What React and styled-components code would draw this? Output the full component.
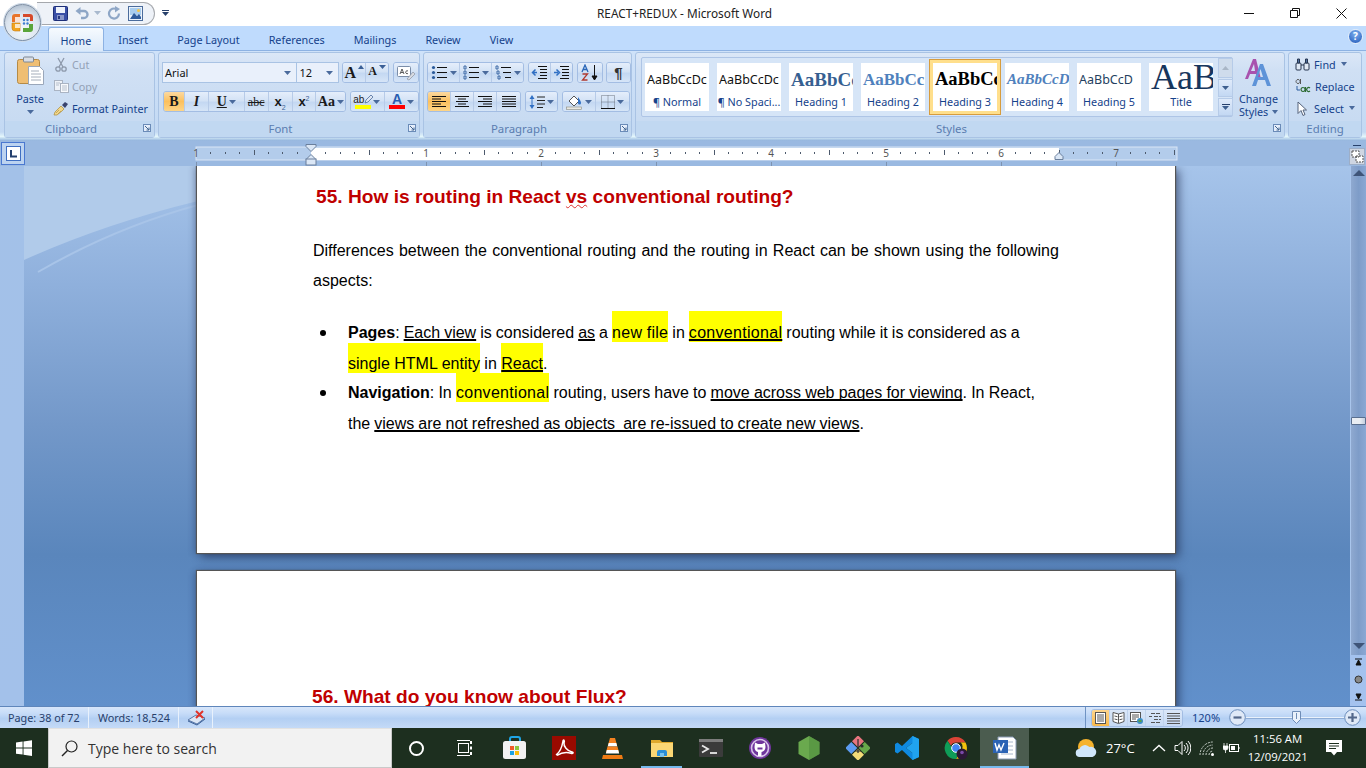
import React from "react";
import styled, { createGlobalStyle } from "styled-components";

const GlobalStyle = createGlobalStyle`
  html, body { margin: 0; padding: 0; height: 100%; overflow: hidden; }
  body { font-family: "Noto Sans", "Open Sans", sans-serif; font-size: 10.8px; color: #15428b; }
  * { box-sizing: border-box; }
`;

/* ---------- small drawings ---------- */

const Ico = ({ w = 16, h = 16, vb, children }) => (
  <svg width={w} height={h} viewBox={vb || `0 0 ${w} ${h}`} style={{ display: "block", flex: "none" }}>
    {children}
  </svg>
);

const Caret = ({ color = "#4a6a9c" }) => (
  <Ico w={7} h={4}><path d="M0 0h7L3.5 4z" fill={color} /></Ico>
);

const OfficeLogo = () => (
  <Ico w={28} h={28}>
    <path d="M3 8q0-3 3-3h5v8H3z" fill="#e8742a" />
    <path d="M3 14h8v8H6q-3 0-3-3z" fill="#f2a51f" stroke="#c77a12" strokeWidth=".6" />
    <path d="M14 5h7q3 0 3 3v4h-3V8h-7z" fill="#d64a2a" />
    <rect x="6" y="8" width="5" height="5" fill="#fff" opacity=".8" />
    <rect x="6" y="15" width="5" height="4" fill="#fff" opacity=".75" />
    <path d="M14 23h7q3 0 3-3v-5h-4v4h-6z" fill="#5aa53a" />
    <g fill="#3f7fd0">
      <circle cx="15" cy="11" r="1.2" /><circle cx="18.5" cy="11" r="1.2" /><circle cx="15" cy="14.5" r="1.2" /><circle cx="18.5" cy="14.5" r="1.2" />
    </g>
  </Ico>
);

const SaveIcon = () => (
  <Ico w={15} h={15}>
    <rect x=".5" y=".5" width="14" height="14" rx="1" fill="#3a4fa6" stroke="#1e2f78" />
    <rect x="3" y="1" width="9" height="6" fill="#eef2fb" />
    <rect x="4" y="9" width="7" height="5" fill="#8a97c9" />
    <rect x="5" y="10" width="2" height="3" fill="#29397f" />
  </Ico>
);

const UndoIcon = () => (
  <Ico w={14} h={14}>
    <path d="M4 5h5a3.5 3.5 0 0 1 0 7H6" fill="none" stroke="#8ea6c6" strokeWidth="2.4" />
    <path d="M5.5 1v8L.5 5z" fill="#8ea6c6" />
  </Ico>
);

const RedoIcon = () => (
  <Ico w={14} h={14}>
    <path d="M9.5 3.2A5 5 0 1 0 12 7.5" fill="none" stroke="#8ea6c6" strokeWidth="2.2" />
    <path d="M8 0v6.5L13 3z" fill="#8ea6c6" />
  </Ico>
);

const ImageIcon = () => (
  <Ico w={15} h={15}>
    <rect x=".5" y=".5" width="14" height="14" fill="#eaf2fb" stroke="#4b6c9c" />
    <rect x="2" y="2" width="11" height="7" fill="#a9cdee" />
    <path d="M2 13l4-6 3 3 2-2 2 3v2z" fill="#2f5c9c" />
    <circle cx="10.5" cy="4.5" r="1.5" fill="#f3c54a" />
  </Ico>
);

const PasteIcon = () => (
  <Ico w={29} h={30}>
    <rect x="1.5" y="3.5" width="22" height="24" rx="2" fill="#efbe73" stroke="#b58a45" />
    <rect x="7.5" y="1" width="10" height="5" rx="1" fill="#d9dde4" stroke="#7d8794" />
    <path d="M12.5 10.5h11l4 4v14h-15z" fill="#fff" stroke="#9aa7ba" />
    <path d="M15 15h8M15 18h10M15 21h10M15 24h10" stroke="#a4adba" />
  </Ico>
);

const CutIcon = () => (
  <Ico w={12} h={15}>
    <path d="M3 1l5 9M9 1L4 10" stroke="#8d99ab" strokeWidth="1.3" />
    <circle cx="3" cy="12" r="2.2" fill="none" stroke="#8d99ab" strokeWidth="1.3" />
    <circle cx="9" cy="12" r="2.2" fill="none" stroke="#8d99ab" strokeWidth="1.3" />
  </Ico>
);

const CopyIcon = () => (
  <Ico w={15} h={13}>
    <rect x=".5" y=".5" width="8" height="10" fill="#eef2f8" stroke="#aab4c3" />
    <rect x="6.5" y="3.5" width="8" height="9" fill="#f8fafd" stroke="#aab4c3" />
    <path d="M8 6h5M8 8h5M8 10h5M2 3h4M2 5h3" stroke="#b6bfcc" />
  </Ico>
);

const BrushIcon = () => (
  <Ico w={16} h={15}>
    <path d="M8 5l3 3-2 2-5 4H1l1-3 4-4z" fill="#f0d68a" stroke="#ab8b3b" strokeWidth=".7" />
    <path d="M9 4l3-3 3 2-3 4z" fill="#39436d" />
    <path d="M3 12l3-3M5 13l3-3" stroke="#b89443" strokeWidth=".7" />
  </Ico>
);

const ClearFmt = () => (
  <Ico w={20} h={16}>
    <rect x="1.5" y="1.5" width="13" height="10" rx="1" fill="#fff" stroke="#7b8ea9" />
    <path d="M4 9l2-5 2 5M5 7.5h2M12 6a1.5 1.5 0 1 0 0 2.5" fill="none" stroke="#333" strokeWidth=".8" />
    <path d="M11 14l6-7 2 2-6 6z" fill="#d8dbe2" stroke="#8d93a0" strokeWidth=".7" />
  </Ico>
);

const PenMark = () => (
  <Ico w={9} h={10}><path d="M1 9l1-3 5-5 2 2-5 5z" fill="#dfe6f2" stroke="#4b6c9c" strokeWidth=".8" /></Ico>
);

const Launcher = () => (
  <Ico w={8} h={8}>
    <rect x=".5" y=".5" width="7" height="7" fill="#e5eefb" stroke="#6a8bb8" />
    <path d="M2 2l4 4M6 3.5V6H3.5" stroke="#41648f" fill="none" />
  </Ico>
);

const ListIcon = ({ marks, indents = [0, 0, 0] }) => (
  <Ico w={17} h={15}>
    {indents.map((r, i) => (
      <React.Fragment key={i}>
        {marks ? (
          <path d={`M${1 + r / 2} ${1 + i * 5}h2v3h-2z`} fill="none" stroke="#2f5f9e" strokeWidth=".9" />
        ) : (
          <circle cx="2.5" cy={2.5 + i * 5} r="1.6" fill="#2a5a9a" />
        )}
        <path d={`M${6 + r} ${2.5 + i * 5}H16`} stroke="#111" />
      </React.Fragment>
    ))}
  </Ico>
);

const IndentIcon = ({ right }) => (
  <Ico w={17} h={13}>
    <path d="M7 .5h9M9 3.5h7M9 6.5h7M9 9.5h7M7 12.5h9" stroke="#111" />
    {right ? (
      <path d="M1 6.5h4M3.5 3.5l3 3-3 3" fill="none" stroke="#2f6fc4" strokeWidth="1.5" />
    ) : (
      <path d="M6 6.5H2M4.5 3.5l-3 3 3 3" fill="none" stroke="#2f6fc4" strokeWidth="1.5" />
    )}
  </Ico>
);

const SortIcon = () => (
  <Ico w={18} h={17}>
    <path d="M1 8l3-7 3 7M2.2 5.5h3.6" fill="none" stroke="#2a66b8" strokeWidth="1.3" />
    <path d="M1.5 10h5L1.5 16h5" fill="none" stroke="#b03a30" strokeWidth="1.3" />
    <path d="M13.5 1v14M11 12l2.5 4 2.5-4z" stroke="#111" fill="#111" />
  </Ico>
);

const AlignIcon = ({ mode }) => {
  const rows = [
    [14, 9, 14, 9, 14],
    [14, 8, 12, 8, 14],
    [14, 9, 14, 9, 14],
    [14, 14, 14, 14, 14],
  ][mode];
  return (
    <Ico w={14} h={11}>
      {rows.map((w, i) => {
        const x = mode === 0 || mode === 3 ? 0 : mode === 2 ? 14 - w : (14 - w) / 2;
        return <rect key={i} x={x} y={i * 2.5} width={w} height="1" fill="#111" />;
      })}
    </Ico>
  );
};

const SpacingIcon = () => (
  <Ico w={16} h={16}>
    <path d="M3 1L.5 5h5zM3 15L.5 11h5z" fill="#2f6fc4" />
    <path d="M3 5v6" stroke="#2f6fc4" />
    <path d="M8 3h8M8 6.5h8M8 10h8M8 13.5h6" stroke="#222" />
  </Ico>
);

const FillIcon = () => (
  <Ico w={17} h={16}>
    <path d="M3 7l5-5 5 5-5 5z" fill="#fff" stroke="#555" />
    <path d="M12 3q3 4 3 6a1.5 1.5 0 0 1-3 0z" fill="#2f6fc4" />
    <rect x="0.5" y="13" width="15" height="2.5" fill="#e8e8e2" stroke="#8b8b83" strokeWidth=".6" />
  </Ico>
);

const BorderIcon = () => (
  <Ico w={14} h={14}>
    <path d="M.5.5h13v13H.5zM7 .5v13M.5 7h13" fill="none" stroke="#6d7480" strokeDasharray="1 1" />
    <path d="M0 13.5h14" stroke="#111" />
  </Ico>
);

const ChangeStyles = () => (
  <Ico w={30} h={29}>
    <path d="M1 21L9 1h3l5 20h-4l-1-5H6l-2 5zM7 13h4l-1-7z" fill="#a852ae" fillRule="evenodd" />
    <path d="M8 28L16 6h3l8 22h-4l-2-6h-7l-2 6zM14 19h5l-2.5-8z" fill="#5e93d8" fillRule="evenodd" />
  </Ico>
);

const FindIcon = () => (
  <Ico w={15} h={15}>
    <rect x="1" y="6" width="5" height="7" rx="1" fill="#dfe8f4" stroke="#26354f" />
    <rect x="9" y="6" width="5" height="7" rx="1" fill="#dfe8f4" stroke="#26354f" />
    <path d="M2.5 2h2v4h-2zM10.5 2h2v4h-2zM6 8h3" fill="#4f6f9f" stroke="#26354f" />
  </Ico>
);

const ReplaceIcon = () => (
  <Ico w={16} h={16}>
    <path d="M3 1.500a2 2 0 1 0 .1 0M5.500 1v5" fill="none" stroke="#555" />
    <path d="M8 9.500a2 2 0 1 0 .1 0M10.500 9v5M15 10a2 2 0 1 0 0 3" fill="none" stroke="#2d6b32" strokeWidth="1.200" />
    <path d="M2 8v4h3" fill="none" stroke="#2f5f9e" />
  </Ico>
);

const PointerIcon = () => (
  <Ico w={11} h={15}>
    <path d="M1 1l8.5 8H6l2 4.5-2 1L4 9.5 1 12.500z" fill="#fff" stroke="#54627a" />
  </Ico>
);

const WindowLogo = () => (
  <Ico w={16} h={16}>
    <path d="M0 2.4l6.6-.9v6.100H0zM7.5 1.4L16 .2v7.4H7.5zM0 8.500h6.600v6.100L0 13.700zM7.500 8.500H16v7.400l-8.500-1.200z" fill="#fff" />
  </Ico>
);

const SearchGlass = () => (
  <Ico w={17} h={17}>
    <circle cx="10.5" cy="6.5" r="5.5" fill="none" stroke="#222" strokeWidth="1.2" />
    <path d="M6.5 10.5L1 16" stroke="#222" strokeWidth="1.4" />
  </Ico>
);

const TaskView = () => (
  <Ico w={17} h={16}>
    <rect x="1.5" y="3.5" width="10" height="9" fill="none" stroke="#fff" />
    <path d="M0 .5h13M0 15.5h13" stroke="#fff" />
    <path d="M14 1v3M14 6.5v3M14 12v3" stroke="#fff" strokeWidth="2" />
  </Ico>
);

const StoreIcon = () => (
  <Ico w={24} h={24}>
    <path d="M7 6V3q0-2 2-2h6q2 0 2 2v3" fill="none" stroke="#1fa5e6" strokeWidth="2" />
    <rect y="5" width="23" height="18" rx="2.5" fill="#f2f2f2" />
    <rect x="7" y="10" width="4" height="4" fill="#ef5a29" />
    <rect x="12" y="10" width="4" height="4" fill="#8cc63f" />
    <rect x="7" y="15" width="4" height="4" fill="#1ba1e2" />
    <rect x="12" y="15" width="4" height="4" fill="#fbbc09" />
  </Ico>
);

const AcrobatIcon = () => (
  <Ico w={24} h={24}>
    <rect width="24" height="24" fill="#990a00" />
    <path d="M4 19c3-2 6-8 7-14 .4-2 2-1 1 2-.5 3 3 8 8 9 2 .5 1 2-1 1.3-5-1.5-9-1-14 2" fill="none" stroke="#fff" strokeWidth="1.5" />
  </Ico>
);

const VlcIcon = () => (
  <Ico w={21} h={23}>
    <path d="M8 1h5l2 7H6z" fill="#f58220" />
    <path d="M6.7 6h7.600l1 3.500H5.700z" fill="#fff" />
    <path d="M5.5 9.5h10l1.5 6H4z" fill="#f58220" />
    <path d="M4.8 13h11.400l1 3.500H3.800z" fill="#fff" />
    <path d="M1 18h19l1 4H0z" fill="#ef7b14" />
  </Ico>
);

const FolderIcon = () => (
  <Ico w={22} h={18}>
    <path d="M0 1h9l2 2h11v15H0z" fill="#e0a92c" />
    <rect y="4" width="22" height="14" fill="#fbd774" />
    <path d="M6 17v-4q0-2 2-2h6q2 0 2 2v4h-3v-3H9v3z" fill="#2b8fd8" />
    <rect x="9" y="14" width="4" height="4" fill="#7ac3ef" />
  </Ico>
);

const TerminalIcon = () => (
  <Ico w={24} h={18}>
    <rect width="24" height="18" rx="1" fill="#3b3b3b" />
    <rect width="24" height="3" fill="#7d7d7d" />
    <path d="M3 6.5L9 10l-6 3.5" fill="none" stroke="#e8e8e8" strokeWidth="1.8" />
    <path d="M11 14h7" stroke="#e8e8e8" strokeWidth="1.8" />
  </Ico>
);

const GithubIcon = () => (
  <Ico w={24} h={24} vb="0 0 24 24">
    <circle cx="12" cy="12" r="11" fill="#6f359c" />
    <circle cx="12" cy="12" r="8.5" fill="none" stroke="#d7c3e8" strokeWidth="1.6" />
    <path d="M6.5 11L7 6.5l3 1.5h4l3-1.5.5 4.5c0 3-2 4.5-4 5v4h-3.5v-4c-2-.5-3.500-2-3.500-5z" fill="#fff" />
    <path d="M9.5 11.5h5v2h-5z" fill="#6f359c" />
  </Ico>
);

const NodeIcon = () => (
  <Ico w={22} h={24}>
    <path d="M11 0l10.5 6v12L11 24 .5 18V6z" fill="#6aa94e" />
    <path d="M11 0l10.5 6v12L11 24z" fill="#4d8c3c" opacity=".55" />
  </Ico>
);

const DiamondIcon = () => (
  <Ico w={24} h={24}>
    <g transform="rotate(45 12 12)">
      <rect x="3" y="3" width="8.5" height="8.5" fill="#e8757f" />
      <rect x="12.5" y="3" width="8.5" height="8.5" fill="#67a84a" />
      <rect x="12.5" y="12.5" width="8.5" height="8.5" fill="#f3dc78" />
      <rect x="3" y="12.5" width="8.5" height="8.5" fill="#5c9bf0" />
    </g>
    <path d="M12 3v14M9 15h6" stroke="#2b2b2b" strokeWidth="1.2" />
    <circle cx="16" cy="10" r="1.6" fill="#2b2b2b" />
  </Ico>
);

const CodeIcon = () => (
  <Ico w={24} h={24}>
    <path d="M17.5 0L24 3v18l-6.500 3L7 14l-4.500 3.500L0 16V8l2.500-1.500L7 10zM17.500 7L11 12l6.500 5z" fill="#0f8ae0" fillRule="evenodd" />
    <path d="M17.5 0L24 3v18l-6.500 3V17L11 12l6.500-5z" fill="#20a3ef" />
  </Ico>
);

const ChromeIcon = () => (
  <Ico w={24} h={24} vb="0 0 24 24">
    <path d="M12 1a11 11 0 0 1 9.500 5.500H12A5.500 5.500 0 0 0 7 9.700L3.500 4.700A11 11 0 0 1 12 1z" fill="#db4437" />
    <path d="M21.500 6.500A11 11 0 0 1 12 23l4.700-8.200a5.500 5.500 0 0 0 0-8.300z" fill="#f4c20d" />
    <path d="M3.500 4.700L8 12a5 5 0 0 0 8.700 2.800L12 23A11 11 0 0 1 3.500 4.700z" fill="#0f9d58" />
    <circle cx="12" cy="12" r="4.3" fill="#4285f4" stroke="#fff" strokeWidth="1" />
    <circle cx="18" cy="18" r="5.5" fill="#2b1836" />
    <circle cx="18" cy="16.5" r="1.8" fill="#7a4aa8" />
  </Ico>
);

const WordIcon = () => (
  <Ico w={24} h={24}>
    <path d="M5 1h15l3 3v19H5z" fill="#fff" stroke="#8a9ab5" />
    <path d="M8 6h12M14 10h6M14 14h6M8 18h12" stroke="#aab8cc" />
    <rect x="0" y="4" width="15" height="13" fill="#2b63b4" />
    <path d="M2 7l2 7 2-5 2 5 3-7" fill="none" stroke="#fff" strokeWidth="1.4" />
  </Ico>
);

const WeatherIcon = () => (
  <Ico w={22} h={20}>
    <circle cx="11" cy="9" r="8" fill="#f5b32d" />
    <path d="M5 19a4 4 0 0 1-.5-8 6 6 0 0 1 10-2 4.5 4.5 0 0 1 3 10z" fill="#cfe6fa" />
  </Ico>
);

const TrayChevron = () => (
  <Ico w={14} h={8}><path d="M1 7l6-5.5L13 7" fill="none" stroke="#fff" strokeWidth="1.3" /></Ico>
);

const SpeakerIcon = () => (
  <Ico w={17} h={16}>
    <path d="M1 5.5h3l4-4v13l-4-4H1z" fill="none" stroke="#fff" />
    <path d="M10 5a4 4 0 0 1 0 6M12 3a7 7 0 0 1 0 10M14 1a10 10 0 0 1 0 14" fill="none" stroke="#fff" />
  </Ico>
);

const WifiIcon = () => (
  <Ico w={16} h={15}>
    <path d="M1 14a13 13 0 0 1 13-13M4 14a10 10 0 0 1 10-10M7 14a7 7 0 0 1 7-7M10 14a4 4 0 0 1 4-4" fill="none" stroke="#c9d2cb" strokeDasharray="2 1" />
    <circle cx="13.5" cy="13.5" r="1.5" fill="#fff" />
  </Ico>
);

const BatteryIcon = () => (
  <Ico w={17} h={12}>
    <path d="M1 1v3M4 1v3M0 4h5v2q0 2-2.500 2T0 6zM2.500 8v3" stroke="#fff" fill="#fff" strokeWidth=".8" />
    <rect x="6.5" y="2.5" width="9" height="7" fill="none" stroke="#fff" />
    <path d="M16 5v2" stroke="#fff" />
    <rect x="8" y="4" width="4" height="4" fill="#fff" />
  </Ico>
);

const NoteIcon = () => (
  <Ico w={16} h={16}>
    <path d="M0 0h16v12h-5l-3 3.5L5 12H0z" fill="#fff" />
    <path d="M3 3.5h10M3 6h10M3 8.5h7" stroke="#1d2f1f" />
  </Ico>
);

const ProofIcon = () => (
  <Ico w={19} h={16}>
    <path d="M1 10l8-5 9 3-8 6z" fill="#dbe6f5" stroke="#5a78a8" />
    <path d="M1 11l9 4 8-6" fill="none" stroke="#3a5f96" />
    <path d="M9 1l7 7M16 1L9 8" stroke="#e0332a" strokeWidth="2" />
  </Ico>
);

const ViewIcon = ({ kind }) => (
  <Ico w={13} h={12}>
    {kind === 0 && <><rect x="1.5" y=".5" width="10" height="11" fill="#fff" stroke="#555" /><path d="M3 3h7M3 5h7M3 7h7M3 9h7" stroke="#555" /></>}
    {kind === 1 && <><path d="M6.5 2L1 .5v9l5.5 2 5.5-2V.5z" fill="#fff" stroke="#555" /><path d="M6.5 2v9M2.5 4l3 .7M2.5 7l3 .7M7.5 4.700l3-.7M7.500 7.700l3-.7" stroke="#555" /></>}
    {kind === 2 && <><rect x=".5" y=".5" width="10" height="9" fill="#fff" stroke="#555" /><path d="M2 3h7M2 5h7M2 7h4" stroke="#555" /><circle cx="10" cy="9" r="3" fill="#3c8fc7" /><path d="M8.500 9h3" stroke="#59a04a" strokeWidth="2" /></>}
    {kind === 3 && <path d="M3 1.500h10M6 4.500h7M1 4.500h3M6 7.500h7M3 10.500h10" stroke="#555" strokeDasharray="4 1" fill="none" />}
    {kind === 4 && <path d="M0 1.500h13M0 4h13M0 6.500h13M0 9h13M0 11.500h13" stroke="#555" />}
  </Ico>
);

const RoundIcon = ({ plus }) => (
  <Ico w={17} h={17}>
    <circle cx="8.5" cy="8.5" r="7.8" fill="#dfe9f7" stroke="#6c8ebc" />
    <path d={plus ? "M4 8.5h9M8.5 4v9" : "M4.5 8.5h8"} stroke="#54688a" strokeWidth="2.2" />
  </Ico>
);

const SliderThumb = () => (
  <Ico w={9} h={13}>
    <path d="M.5.5h8v8L4.5 12.5.5 8.500z" fill="#e9f1fb" stroke="#6f8db6" />
    <path d="M4.5 2v6" stroke="#6f8db6" />
  </Ico>
);

const RULER_LEFT = 190;
const INCH = 115;
const Ruler = () => {
  const zero = 311 - RULER_LEFT;
  const ticks = [];
  for (let i = -8; i <= 60; i++) {
    const x = zero + (i * INCH) / 8;
    if (x < 8 || x > 985) continue;
    const m = ((i % 8) + 8) % 8;
    if (m === 0) continue;
    ticks.push(
      m === 4 ? <rect key={i} x={Math.round(x)} y="9" width="1" height="5" fill="#4d5a6d" /> :
      <rect key={i} x={Math.round(x)} y="11" width="1" height="2" fill="#4d5a6d" />
    );
  }
  const marks = [-1, 1, 2, 3, 4, 5, 6, 7];
  return (
    <RulerSvg width="1000" height="25" viewBox="0 0 1000 25">
      <rect x="6" y="6" width="981" height="13" fill="#b3cceb" stroke="#d9e6f6" />
      <rect x={zero} y="7" width="748" height="12" fill="#fff" />
      {ticks}
      {marks.map((n) => (
        <g key={n}>
          <text x={zero + (n < 0 ? -INCH : n * INCH)} y="16" textAnchor="middle" fontFamily="Noto Sans" fontSize="10" fill="#555">{Math.abs(n)}</text>
          <rect x={zero + (n < 0 ? -INCH : n * INCH)} y="21" width="1" height="4" fill="#7e93b0" />
        </g>
      ))}
      <path d={`M${zero - 5} 3.5h10v2l-5 5-5-5zM${zero - 5} 18.5l5-5 5 5z`} fill="#dbe7f6" stroke="#6a7f9c" />
      <rect x={zero - 5} y="18" width="10" height="6" fill="#dbe7f6" stroke="#6a7f9c" />
      <path d={`M${zero + 748 - 4} 18.5h8v-3l-4-4-4 4z`} fill="#dbe7f6" stroke="#6a7f9c" />
    </RulerSvg>
  );
};

/* ---------- page data ---------- */

const tabs = ["Insert", "Page Layout", "References", "Mailings", "Review", "View"];

const galleryItems = [
  { name: "¶ Normal", sample: "AaBbCcDc", font: "'Noto Sans'", size: 12.5, color: "#111", line: 33 },
  { name: "¶ No Spaci...", sample: "AaBbCcDc", font: "'Noto Sans'", size: 12.5, color: "#111", line: 33 },
  { name: "Heading 1", sample: "AaBbCc", font: "'Liberation Serif'", size: 19, color: "#365f91", bold: true, line: 33 },
  { name: "Heading 2", sample: "AaBbCc", font: "'Liberation Serif'", size: 17, color: "#4f81bd", bold: true, line: 33 },
  { name: "Heading 3", sample: "AaBbCc", font: "'Liberation Serif'", size: 18.5, color: "#000", bold: true, line: 33, selected: true },
  { name: "Heading 4", sample: "AaBbCcD", font: "'Liberation Serif'", size: 15, color: "#4f81bd", bold: true, italic: true, line: 33 },
  { name: "Heading 5", sample: "AaBbCcD", font: "'Noto Sans'", size: 12.5, color: "#243f60", line: 33 },
  { name: "Title", sample: "AaB", font: "'Liberation Serif'", size: 36, color: "#17365d", line: 28 },
];

const taskIcons = [
  { id: "store", icon: <StoreIcon /> },
  { id: "acrobat", icon: <AcrobatIcon /> },
  { id: "vlc", icon: <VlcIcon /> },
  { id: "files", icon: <FolderIcon />, running: true },
  { id: "terminal", icon: <TerminalIcon /> },
  { id: "github", icon: <GithubIcon /> },
  { id: "node", icon: <NodeIcon /> },
  { id: "git", icon: <DiamondIcon /> },
  { id: "code", icon: <CodeIcon /> },
  { id: "chrome", icon: <ChromeIcon /> },
  { id: "word", icon: <WordIcon />, running: true, active: true },
];

const App = () => (
  <>
    <GlobalStyle />
    <Screen>
      <OfficeButton><OfficeLogo /></OfficeButton>

      <TitleBar>
        <QuickAccess>
          <SaveIcon />
          <UndoIcon />
          <QatCaret><Caret color="#a9b9ce" /></QatCaret>
          <RedoIcon />
          <ImageIcon />
        </QuickAccess>
        <Customize>
          <Dash />
          <Caret color="#27406b" />
        </Customize>
        <WindowTitle>REACT+REDUX - Microsoft Word</WindowTitle>
        <WindowControls>
          <WinControl><Ico w={10} h={10}><path d="M0 5.5h10" stroke="#111" /></Ico></WinControl>
          <WinControl><Ico w={10} h={10}><path d="M.5 2.5h7v7h-7zM2.5 2.5v-2h7v7h-2" fill="none" stroke="#111" /></Ico></WinControl>
          <WinControl><Ico w={11} h={11}><path d="M.5.5l10 10M10.5.5l-10 10" stroke="#111" /></Ico></WinControl>
        </WindowControls>
      </TitleBar>

      <TabBar>
        <HomeTab>Home</HomeTab>
        {tabs.map((t) => <Tab key={t}>{t}</Tab>)}
        <HelpButton>?</HelpButton>
      </TabBar>

      <Ribbon>
        <Group $w={151}>
          <GroupBody>
            <PasteColumn>
              <PasteIcon />
              <PasteLabel>Paste</PasteLabel>
              <Caret />
            </PasteColumn>
            <SmallList>
              <SmallAction $muted><CutSlot><CutIcon /></CutSlot>Cut</SmallAction>
              <SmallAction $muted><CutSlot><CopyIcon /></CutSlot>Copy</SmallAction>
              <SmallAction><CutSlot><BrushIcon /></CutSlot>Format Painter</SmallAction>
            </SmallList>
          </GroupBody>
          <GroupLabel $launcher>Clipboard<LauncherSlot><Launcher /></LauncherSlot></GroupLabel>
        </Group>

        <Group $w={262}>
          <ToolRows>
            <ToolRow>
              <Combo $w={136}>Arial<Caret /></Combo>
              <Combo $w={43}>12<Caret /></Combo>
              <Segment $gap={4}>
                <Tool $w={23} $align="flex-start"><SerifGlyph $bold $size={16}>A</SerifGlyph><Ico w={6} h={4}><path d="M0 4h6L3 0z" fill="#3a5f96" /></Ico></Tool>
                <Tool $w={22} $align="flex-start"><SerifGlyph $bold $size={12}>A</SerifGlyph><Caret color="#3a5f96" /></Tool>
              </Segment>
              <Segment $gap={4}><Tool $w={24}><ClearFmt /></Tool></Segment>
            </ToolRow>
            <ToolRow>
              <Segment $gap={1}>
                <Tool $w={21} $on><SerifGlyph $bold>B</SerifGlyph></Tool>
                <Tool $w={24}><SerifGlyph $italic $bold>I</SerifGlyph></Tool>
                <Tool $w={36}><SerifGlyph $bold $under>U</SerifGlyph><Caret /></Tool>
                <Tool $w={24}><SerifGlyph $strike $size={12}>abc</SerifGlyph></Tool>
                <Tool $w={24}><ScriptGlyph>x<sub>2</sub></ScriptGlyph></Tool>
                <Tool $w={24}><ScriptGlyph>x<sup>2</sup></ScriptGlyph></Tool>
                <Tool $w={29}><SerifGlyph $bold>Aa</SerifGlyph><Caret /></Tool>
              </Segment>
              <Segment $gap={4}>
                <Tool $w={34}><Swatch $color="#ffff00">ab<PenMark /></Swatch><Caret /></Tool>
                <Tool $w={33}><Swatch $color="#ff0000" $big>A</Swatch><Caret /></Tool>
              </Segment>
            </ToolRow>
          </ToolRows>
          <GroupLabel $launcher>Font<LauncherSlot><Launcher /></LauncherSlot></GroupLabel>
        </Group>

        <Group $w={209}>
          <ToolRows>
            <ToolRow>
              <Segment>
                <Tool $w={33}><ListIcon /><Caret /></Tool>
                <Tool $w={33}><ListIcon marks /><Caret /></Tool>
                <Tool $w={32}><ListIcon marks indents={[0, 2, 4]} /><Caret /></Tool>
              </Segment>
              <Segment $gap={4}>
                <Tool $w={22}><IndentIcon /></Tool>
                <Tool $w={22}><IndentIcon right /></Tool>
              </Segment>
              <Segment $gap={4}><Tool $w={24}><SortIcon /></Tool></Segment>
              <Segment $gap={3}><Tool $w={24}><Pilcrow>¶</Pilcrow></Tool></Segment>
            </ToolRow>
            <ToolRow>
              <Segment>
                <Tool $w={23} $on><AlignIcon mode={0} /></Tool>
                <Tool $w={23}><AlignIcon mode={1} /></Tool>
                <Tool $w={23}><AlignIcon mode={2} /></Tool>
                <Tool $w={23}><AlignIcon mode={3} /></Tool>
              </Segment>
              <Segment $gap={4}><Tool $w={31}><SpacingIcon /><Caret /></Tool></Segment>
              <Segment $gap={4}>
                <Tool $w={33}><FillIcon /><Caret /></Tool>
                <Tool $w={33}><BorderIcon /><Caret /></Tool>
              </Segment>
            </ToolRow>
          </ToolRows>
          <GroupLabel $launcher>Paragraph<LauncherSlot><Launcher /></LauncherSlot></GroupLabel>
        </Group>

        <Group $w={650}>
          <GroupBody>
            <Gallery>
              {galleryItems.map((s) => (
                <StyleTile key={s.name} $selected={s.selected}>
                  <StyleSample $font={s.font} $size={s.size} $color={s.color} $bold={s.bold} $italic={s.italic} $line={s.line}>{s.sample}</StyleSample>
                  <StyleName>{s.name}</StyleName>
                </StyleTile>
              ))}
              <GalleryScroll>
                <ScrollStep $h={20} $dim><Ico w={7} h={4}><path d="M0 4h7L3.5 0z" fill="#a9b6c6" /></Ico></ScrollStep>
                <ScrollStep $h={18}><Caret color="#3e5f8f" /></ScrollStep>
                <ScrollStep $h={18}><Dash $wide /><Caret color="#3e5f8f" /></ScrollStep>
              </GalleryScroll>
            </Gallery>
            <ChangeColumn>
              <ChangeStyles />
              <ChangeLabel>Change<br />Styles <Triangle /></ChangeLabel>
            </ChangeColumn>
          </GroupBody>
          <GroupLabel $launcher>Styles<LauncherSlot><Launcher /></LauncherSlot></GroupLabel>
        </Group>

        <Group $w={74}>
          <EditList>
            <EditAction><FindIcon />Find <Triangle /></EditAction>
            <EditAction><ReplaceIcon />Replace</EditAction>
            <EditAction><PointerSlot><PointerIcon /></PointerSlot>Select <Triangle /></EditAction>
          </EditList>
          <GroupLabel>Editing</GroupLabel>
        </Group>
      </Ribbon>

      <RulerRow>
        <TabStop><Ico w={15} h={15}><rect x=".5" y=".5" width="14" height="14" fill="#fff" stroke="#3f6fc2" /><path d="M5 4v6.5h6" fill="none" stroke="#24406e" strokeWidth="2" /></Ico></TabStop>
        <Ruler />
        <RulerToggle>
          <Dash $wide />
          <ToggleBox>
            <Ico w={13} h={13}><path d="M1 1h7v6H1zM5 6h7v6H5z" fill="#fff" stroke="#555" strokeDasharray="2 1" /></Ico>
          </ToggleBox>
        </RulerToggle>
      </RulerRow>

      <DocArea>
        <Gutter />
        <Workspace>
          <Swoosh width="174" height="120" viewBox="0 0 174 120">
            <path d="M0 94V0h174v35Q80 58 0 94z" fill="#b1cbea" />
            <path d="M14 106Q90 62 174 39" stroke="#a8c4e8" strokeWidth="2" fill="none" />
          </Swoosh>
          <Page $h={387}>
            <Heading>55. How is routing in React <Wavy>vs</Wavy> conventional routing?</Heading>
            <Intro>
              <TextLine $spacing={0.82}>Differences between the conventional routing and the routing in React can be shown using the following</TextLine>
              <TextLine>aspects:</TextLine>
            </Intro>
            <Bullets>
              <BulletItem>
                <Dot />
                <div>
                  <TextLine $spacing={-0.4}>
                    <b>Pages</b>: <Grammar>Each view</Grammar> is considered <Grammar>as</Grammar> a <Mark $wide>new file</Mark> in <Mark $wide><Grammar>conventional</Grammar></Mark> routing while it is considered as a
                  </TextLine>
                  <TextLine $nudge={1}><Mark $top={12}>single HTML entity</Mark> in <Mark $top={12}><Grammar>React</Grammar></Mark>.</TextLine>
                </div>
              </BulletItem>
              <BulletItem>
                <Dot />
                <div>
                  <TextLine $spacing={-0.3}>
                    <b>Navigation</b>: In <Mark $wide $top={11}>conventional</Mark> routing, users have to <Grammar>move across web pages for viewing</Grammar>. In React,
                  </TextLine>
                  <TextLine $nudge={1} $spacing={-0.4}>the <Grammar>views are not refreshed as objects  are re-issued to create new views</Grammar>.</TextLine>
                </div>
              </BulletItem>
            </Bullets>
          </Page>
          <Page $h={500}>
            <SecondHeading>56. What do you know about Flux?</SecondHeading>
          </Page>
        </Workspace>
        <ScrollBar>
          <ScrollTrack>
            <Ico w={12} h={6}><path d="M0 6L6 0l6 6z" fill="#3f5478" /></Ico>
            <ScrollThumb />
            <Ico w={12} h={6}><path d="M0 0h12L6 6z" fill="#3f5478" /></Ico>
          </ScrollTrack>
          <BrowseButtons>
            <Ico w={9} h={9}><path d="M1 1h7M4.5 2L2 7h5z" stroke="#111" fill="#111" /></Ico>
            <Ico w={9} h={9}><circle cx="4.5" cy="4.5" r="3.5" fill="#888" stroke="#333" /></Ico>
            <Ico w={9} h={9}><path d="M1 8h7M4.5 7L2 2h5z" stroke="#111" fill="#111" /></Ico>
          </BrowseButtons>
        </ScrollBar>
      </DocArea>

      <StatusBar>
        <StatusCell $w={89}>Page: 38 of 72</StatusCell>
        <StatusCell $w={90} $pad={9}>Words: 18,524</StatusCell>
        <StatusCell $w={34} $pad={8}><ProofIcon /></StatusCell>
        <StatusRight>
          <ViewButtons>
            {[0, 1, 2, 3, 4].map((k) => (
              <ViewButton key={k} $on={k === 0}><ViewIcon kind={k} /></ViewButton>
            ))}
          </ViewButtons>
          <ZoomLevel>120%</ZoomLevel>
          <RoundIcon />
          <ZoomTrack><ThumbSlot><SliderThumb /></ThumbSlot></ZoomTrack>
          <RoundIcon plus />
        </StatusRight>
      </StatusBar>

      <Taskbar>
        <StartButton><WindowLogo /></StartButton>
        <SearchBox><SearchGlass /><SearchText>Type here to search</SearchText></SearchBox>
        <TaskSlot><Ring /></TaskSlot>
        <TaskSlot><TaskView /></TaskSlot>
        {taskIcons.map((t) => (
          <TaskSlot key={t.id} $running={t.running} $active={t.active}>{t.icon}</TaskSlot>
        ))}
        <Tray>
          <WeatherIcon />
          <Temp>27°C</Temp>
          <TrayIcons>
            <TrayChevron />
            <SpeakerIcon />
            <WifiIcon />
            <BatteryIcon />
          </TrayIcons>
          <Clock><span>11:56 AM</span><span>12/09/2021</span></Clock>
          <NoteIcon />
        </Tray>
      </Taskbar>
    </Screen>
  </>
);

/* ---------- chrome ---------- */

const Screen = styled.div`
  position: relative;
  width: 1366px;
  height: 768px;
  display: flex;
  flex-direction: column;
  overflow: hidden;
  background: #fff;
`;

const OfficeButton = styled.div`
  position: absolute;
  left: 4px;
  top: 4px;
  z-index: 3;
  width: 37px;
  height: 37px;
  border-radius: 50%;
  display: flex;
  align-items: center;
  justify-content: center;
  background: radial-gradient(circle at 50% 70%, #f4f8fc 0%, #dbe4ee 55%, #98a9bd 100%);
  border: 1px solid #7d8ea3;
  box-shadow: 0 0 0 1px #cfdbe9;
`;

const TitleBar = styled.div`
  position: relative;
  height: 26px;
  flex: none;
  display: flex;
  align-items: center;
  padding-left: 37px;
  background: #fff;
`;

const QuickAccess = styled.div`
  width: 118px;
  height: 23px;
  padding-left: 16px;
  display: flex;
  align-items: center;
  gap: 7px;
  border: 1px solid #a5a8ad;
  border-left: none;
  border-radius: 0 12px 12px 0 / 0 12px 12px 0;
  background: #eef2f8;
`;

const QatCaret = styled.span`
  margin: 0 -1px 0 -2px;
`;

const Customize = styled.div`
  margin-left: 7px;
  display: flex;
  flex-direction: column;
  align-items: center;
  gap: 1px;
`;

const Dash = styled.span`
  display: block;
  width: ${(p) => (p.$wide ? 8 : 7)}px;
  height: 1px;
  background: #27406b;
`;

const WindowTitle = styled.div`
  position: absolute;
  left: 597px;
  top: 5px;
  font-size: 11.8px;
  color: #222;
  white-space: nowrap;
`;

const WindowControls = styled.div`
  margin-left: auto;
  margin-right: 2px;
  display: flex;
`;

const WinControl = styled.div`
  width: 46px;
  height: 26px;
  display: flex;
  align-items: center;
  justify-content: center;
`;

const TabBar = styled.nav`
  position: relative;
  height: 24px;
  flex: none;
  padding: 1px 0 0 48px;
  display: flex;
  align-items: stretch;
  background: #bfdbfd;
`;

const Tab = styled.div`
  padding: 5px 14.5px 0;
  color: #15428b;
  white-space: nowrap;
`;

const HomeTab = styled(Tab)`
  padding: 5px 11.5px 0;
  border: 1px solid #8db2e3;
  border-bottom: none;
  border-radius: 3px 3px 0 0;
  background: linear-gradient(#f6fafe, #dbe9f9);
  margin-bottom: -1px;
  z-index: 1;
`;

const HelpButton = styled.div`
  position: absolute;
  right: 3px;
  top: 3px;
  width: 15px;
  height: 15px;
  border-radius: 50%;
  background: radial-gradient(circle at 50% 30%, #7fb0ef, #1f57b8);
  border: 1px solid #e6effa;
  color: #fff;
  font-weight: 700;
  font-size: 10px;
  line-height: 13px;
  text-align: center;
`;

const Ribbon = styled.div`
  height: 91px;
  flex: none;
  padding: 1px 0 0 4px;
  display: flex;
  gap: 3px;
  background: linear-gradient(#cfe2f9, #c3d9f3 90%, #e3f6fb 95%, #8fb1dc);
  border-top: 1px solid #8db2e3;
`;

const Group = styled.section`
  position: relative;
  width: ${(p) => p.$w}px;
  height: 86px;
  flex: none;
  display: flex;
  flex-direction: column;
  border: 1px solid #a9c3e4;
  border-radius: 3px;
  background: linear-gradient(#dbe7f7, #d0e0f4 20%, #c8dbf2 80%);
`;

const GroupBody = styled.div`
  flex: 1;
  min-height: 0;
  display: flex;
`;

const GroupLabel = styled.div`
  position: relative;
  height: 16px;
  flex: none;
  padding-right: ${(p) => (p.$launcher ? 17 : 0)}px;
  font-size: 11.4px;
  line-height: 16px;
  text-align: center;
  color: #5a7db0;
  background: #c1d8f1;
`;

const LauncherSlot = styled.span`
  position: absolute;
  right: 3px;
  top: 3px;
`;

const PasteColumn = styled.div`
  width: 48px;
  padding-top: 3px;
  display: flex;
  flex-direction: column;
  align-items: center;
  margin-left: 1px;
`;

const PasteLabel = styled.div`
  margin: 6px 0 4px;
  line-height: 14px;
`;

const SmallList = styled.div`
  margin-left: -1px;
  display: flex;
  flex-direction: column;
`;

const SmallAction = styled.div`
  height: 22px;
  display: flex;
  align-items: center;
  white-space: nowrap;
  color: ${(p) => (p.$muted ? "#93a1b6" : "#15428b")};
`;

const CutSlot = styled.span`
  width: 19px;
  display: flex;
  justify-content: center;
  padding-right: 3px;
`;

const ToolRows = styled.div`
  flex: 1;
  padding: 9px 0 0 3px;
  display: flex;
  flex-direction: column;
  gap: 8px;
`;

const ToolRow = styled.div`
  height: 21px;
  display: flex;
`;

const Segment = styled.div`
  margin-left: ${(p) => p.$gap || 0}px;
  display: flex;
  border: 1px solid #a3bde3;
  border-radius: 3px;
  overflow: hidden;
`;

const Tool = styled.div`
  width: ${(p) => p.$w}px;
  display: flex;
  align-items: ${(p) => p.$align || "center"};
  justify-content: center;
  padding-top: ${(p) => (p.$align ? 2 : 0)}px;
  gap: 2px;
  color: #1f2a3d;
  border-right: 1px solid #b7cbe8;
  background: ${(p) => (p.$on
    ? "linear-gradient(#fcd9a0, #fbc05e 50%, #fdd588)"
    : "linear-gradient(#e5eefb, #d3e2f5 45%, #c4d8f2 55%, #d6e5f7)")};
  &:last-child { border-right: none; }
`;

const Combo = styled.div`
  width: ${(p) => p.$w}px;
  margin-right: -1px;
  padding: 0 5px 0 2px;
  display: flex;
  align-items: center;
  justify-content: space-between;
  font-size: 11px;
  color: #111;
  background: #e9f0fb;
  border: 1px solid #a9c3e4;
`;

const SerifGlyph = styled.span`
  font-family: "Liberation Serif", serif;
  font-size: ${(p) => p.$size || 14}px;
  line-height: 1;
  font-weight: ${(p) => (p.$bold ? 700 : 400)};
  font-style: ${(p) => (p.$italic ? "italic" : "normal")};
  text-decoration: ${(p) => (p.$under ? "underline" : p.$strike ? "line-through" : "none")};
  color: #1a1a1a;
`;

const ScriptGlyph = styled.span`
  font-family: "Liberation Sans", sans-serif;
  font-weight: 700;
  font-size: 13px;
  line-height: 1;
  color: #1a1a1a;
  sub, sup { font-size: 7px; font-weight: 400; color: #3a5f96; line-height: 0; }
`;

const Swatch = styled.span`
  display: flex;
  align-items: flex-start;
  justify-content: center;
  width: 16px;
  height: 15px;
  line-height: 11px;
  font-family: "Liberation Sans", sans-serif;
  font-size: ${(p) => (p.$big ? 14 : 10)}px;
  font-weight: ${(p) => (p.$big ? 700 : 400)};
  color: ${(p) => (p.$big ? "#2a5db0" : "#222")};
  border-bottom: 4px solid ${(p) => p.$color};
`;

const Pilcrow = styled.span`
  font-family: "Liberation Sans", sans-serif;
  font-weight: 700;
  font-size: 15px;
  line-height: 1;
  color: #333;
`;

/* ---------- styles gallery ---------- */

const Gallery = styled.div`
  width: 592px;
  height: 60px;
  margin: 4px 0 0 5px;
  padding: 5px 0 0 3px;
  display: flex;
  gap: 8px;
  border: 1px solid #aec5e6;
  border-radius: 2px;
  background: #d6e5f7;
`;

const StyleTile = styled.div`
  width: 64px;
  height: 48px;
  flex: none;
  display: flex;
  flex-direction: column;
  background: #fff;
  box-shadow: ${(p) => (p.$selected ? "0 0 0 3px #ffdf8c, 0 0 0 4px #d79c3e" : "none")};
`;

const StyleSample = styled.div`
  height: 31px;
  padding: 0 1px 0 2px;
  overflow: hidden;
  white-space: nowrap;
  line-height: ${(p) => p.$line}px;
  font-family: ${(p) => p.$font}, sans-serif;
  font-size: ${(p) => p.$size}px;
  font-weight: ${(p) => (p.$bold ? 700 : 400)};
  font-style: ${(p) => (p.$italic ? "italic" : "normal")};
  color: ${(p) => p.$color};
`;

const StyleName = styled.div`
  flex: 1;
  white-space: nowrap;
  text-align: center;
  line-height: 16px;
  color: #15428b;
`;

const GalleryScroll = styled.div`
  width: 15px;
  margin: -5px 0 0 -3px;
  display: flex;
  flex-direction: column;
  gap: 1px;
  flex: none;
`;

const ScrollStep = styled.div`
  height: ${(p) => p.$h}px;
  display: flex;
  flex-direction: column;
  align-items: center;
  justify-content: center;
  gap: 1px;
  border: 1px solid #b6cbe8;
  background: ${(p) => (p.$dim ? "#cfdcec" : "linear-gradient(#dfeafa, #c3d8f3)")};
`;

const ChangeColumn = styled.div`
  width: 49px;
  padding-top: 5px;
  margin-left: 1px;
  display: flex;
  flex-direction: column;
  align-items: center;
`;

const ChangeLabel = styled.div`
  margin-top: 5px;
  line-height: 13px;
  text-align: center;
  white-space: nowrap;
`;

const Triangle = styled.span`
  display: inline-block;
  width: 0;
  height: 0;
  margin-left: 1px;
  vertical-align: 2px;
  border: 3px solid transparent;
  border-top: 4px solid #4a6a9c;
  border-bottom: none;
`;

const EditList = styled.div`
  flex: 1;
  padding-left: 6px;
  display: flex;
  flex-direction: column;
`;

const EditAction = styled.div`
  height: 22px;
  display: flex;
  align-items: center;
  gap: 4px;
  white-space: nowrap;
`;

const PointerSlot = styled.span`
  width: 15px;
  display: flex;
  justify-content: center;
`;

/* ---------- ruler ---------- */

const RulerRow = styled.div`
  height: 25px;
  flex: none;
  display: flex;
  background: #9ab9e1;
`;

const TabStop = styled.div`
  width: 24px;
  height: 23px;
  margin: 1px 0 0 1px;
  display: flex;
  align-items: center;
  justify-content: center;
  border: 1px solid #4a78d0;
  background: #bcd3f0;
`;

const RulerSvg = styled.svg`
  display: block;
  flex: none;
  margin-left: 165px;
`;

const RulerToggle = styled.div`
  margin-left: auto;
  margin-right: 1px;
  display: flex;
  flex-direction: column;
  align-items: center;
  gap: 2px;
  padding-top: 4px;
`;

const ToggleBox = styled.div`
  width: 16px;
  height: 17px;
  display: flex;
  align-items: center;
  justify-content: center;
  background: #cfd6e2;
  border: 1px solid #9daec7;
`;

/* ---------- document ---------- */

const DocArea = styled.div`
  flex: 1;
  min-height: 0;
  display: flex;
`;

const Gutter = styled.div`
  width: 24px;
  flex: none;
  background: linear-gradient(#a3c1e8, #a3c1ea);
`;

const Workspace = styled.div`
  position: relative;
  flex: 1;
  min-width: 0;
  padding-left: 173px;
  display: flex;
  flex-direction: column;
  gap: 18px;
  overflow: hidden;
  background: linear-gradient(#a6c4ea 0%, #8fb0dc 22%, #7398c9 48%, #5a86bc 72%, #6190cb 100%);
`;

const Swoosh = styled.svg`
  position: absolute;
  left: 0;
  top: 0;
`;

const Page = styled.div`
  position: relative;
  width: 978px;
  height: ${(p) => p.$h}px;
  flex: none;
  padding-left: 116px;
  background: #fff;
  color: #000;
  font-family: "Liberation Sans", Arial, sans-serif;
  font-size: 16px;
  box-shadow: 0 0 1px 1px #555, 4px 4px 9px rgba(25, 35, 70, 0.6), -3px 0 6px rgba(25, 35, 70, 0.25);
`;

const Heading = styled.h2`
  margin: 0 0 24px 3px;
  padding-top: 16px;
  font-size: 19.15px;
  font-weight: 700;
  line-height: 30px;
  color: #c00000;
  white-space: nowrap;
`;

const SecondHeading = styled(Heading)`
  margin: 0 0 0 -1px;
  padding-top: 111px;
`;

const Wavy = styled.span`
  text-decoration: underline wavy #d33;
  text-decoration-thickness: 1px;
`;

const Intro = styled.div`
  margin-bottom: 22px;
`;

const TextLine = styled.div`
  height: 30px;
  margin-top: ${(p) => p.$nudge || 0}px;
  line-height: 30px;
  white-space: pre;
  word-spacing: ${(p) => p.$spacing || 0}px;
`;

const Bullets = styled.ul`
  margin: 0;
  padding: 0;
  list-style: none;
`;

const BulletItem = styled.li`
  display: grid;
  grid-template-columns: 35px 1fr;
  & + & { margin-top: -1px; }
`;

const Dot = styled.span`
  width: 6px;
  height: 6px;
  margin: 12px 0 0 7px;
  border-radius: 50%;
  background: #000;
`;

const Grammar = styled.span`
  text-decoration: underline #000 2px;
  text-underline-offset: 1px;
  text-decoration-skip-ink: none;
`;

const Mark = styled.span`
  padding: ${(p) => p.$top ?? 13}px 0 1px;
  background: #ffff00;
  letter-spacing: ${(p) => (p.$wide ? 0.3 : 0)}px;
`;

/* ---------- scrollbar ---------- */

const ScrollBar = styled.div`
  width: 16px;
  flex: none;
  display: flex;
  flex-direction: column;
  background: #a4c2ee;
`;

const ScrollTrack = styled.div`
  position: relative;
  height: 489px;
  padding: 4px 0 6px;
  display: flex;
  flex-direction: column;
  align-items: center;
  justify-content: space-between;
  border-left: 1px solid #a9c5ec;
  background: linear-gradient(90deg, #8fa9d0, #7e9cc8 50%, #8aa8d4);
`;

const ScrollThumb = styled.div`
  position: absolute;
  left: 0;
  top: 251px;
  width: 15px;
  height: 8px;
  border: 1px solid #5a6f8f;
  border-radius: 1px;
  background: linear-gradient(90deg, #e9edf3 60%, #c3cfdf);
`;

const BrowseButtons = styled.div`
  flex: 1;
  padding: 3px 0 5px;
  display: flex;
  flex-direction: column;
  align-items: center;
  justify-content: space-between;
`;

/* ---------- status bar ---------- */

const StatusBar = styled.footer`
  height: 22px;
  flex: none;
  display: flex;
  align-items: stretch;
  border-top: 1px solid #5f86bb;
  background: linear-gradient(#d7e6fa, #c7dcf8 30%, #b3cff3 55%, #c4daf7);
`;

const StatusCell = styled.div`
  width: ${(p) => p.$w}px;
  padding-left: ${(p) => p.$pad || 8}px;
  display: flex;
  align-items: center;
  white-space: nowrap;
  color: #28406b;
  border-right: 1px solid #e8f1fc;
`;

const StatusRight = styled.div`
  margin-left: auto;
  width: 281px;
  padding: 0 5px;
  display: flex;
  align-items: center;
  border-left: 1px solid #6f93c3;
`;

const ViewButtons = styled.div`
  height: 18px;
  display: flex;
  border: 1px solid #a3bde3;
  border-radius: 3px;
  overflow: hidden;
`;

const ViewButton = styled.div`
  width: 18px;
  display: flex;
  align-items: center;
  justify-content: center;
  border-right: 1px solid #c0d3ec;
  background: ${(p) => (p.$on ? "linear-gradient(#fcd58f, #f9b949)" : "linear-gradient(#dbe7f8, #c6daf4)")};
  &:last-child { border-right: none; }
`;

const ZoomLevel = styled.div`
  margin: 0 9px;
  font-size: 11px;
  color: #15428b;
`;

const ZoomTrack = styled.div`
  position: relative;
  flex: 1;
  height: 2px;
  background: #e9f1fb;
  border-bottom: 1px solid #8fadd6;
`;

const ThumbSlot = styled.span`
  position: absolute;
  left: 46px;
  top: -6px;
`;

/* ---------- taskbar ---------- */

const Taskbar = styled.div`
  height: 40px;
  flex: none;
  display: flex;
  align-items: stretch;
  background: #1d2f1f;
`;

const StartButton = styled.div`
  width: 48px;
  display: flex;
  align-items: center;
  justify-content: center;
`;

const SearchBox = styled.div`
  width: 344px;
  padding-left: 12px;
  display: flex;
  align-items: center;
  gap: 10px;
  background: #f2f2f2;
  border: 1px solid #c9c9c9;
  border-top-color: #e2e2e2;
`;

const SearchText = styled.span`
  font-family: "Open Sans", sans-serif;
  font-size: 14px;
  color: #333;
  white-space: nowrap;
`;

const TaskSlot = styled.div`
  position: relative;
  width: 49px;
  flex: none;
  display: flex;
  align-items: center;
  justify-content: center;
  background: ${(p) => (p.$active ? "#4b5c4f" : "transparent")};
  &::after {
    content: "";
    display: ${(p) => (p.$running ? "block" : "none")};
    position: absolute;
    left: ${(p) => (p.$active ? 0 : 4)}px;
    right: ${(p) => (p.$active ? 0 : 4)}px;
    bottom: 0;
    height: 2px;
    background: #76b9ed;
  }
`;

const Ring = styled.span`
  width: 15px;
  height: 15px;
  border: 2.5px solid #fff;
  border-radius: 50%;
`;

const Tray = styled.div`
  flex: 1;
  padding-left: 46px;
  display: flex;
  align-items: center;
  color: #fff;
`;

const Temp = styled.span`
  margin-left: 9px;
  font-family: "Open Sans", sans-serif;
  font-size: 13px;
  white-space: nowrap;
`;

const TrayIcons = styled.div`
  margin-left: 17px;
  display: flex;
  align-items: center;
  gap: 8px;
`;

const Clock = styled.div`
  width: 70px;
  margin: 0 13px 2px 3px;
  display: flex;
  flex-direction: column;
  align-items: center;
  gap: 3px;
  font-family: "Open Sans", sans-serif;
  font-size: 11.3px;
  line-height: 15px;
  white-space: nowrap;
`;

export default App;
